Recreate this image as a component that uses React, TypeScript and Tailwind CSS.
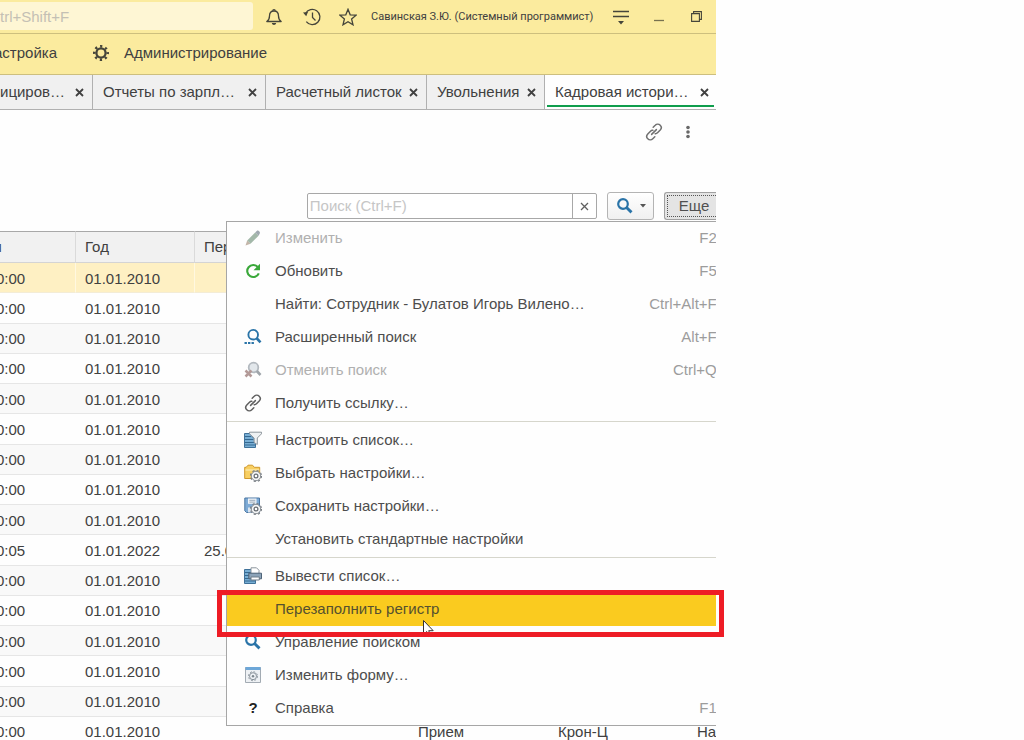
import React from "react";

type Row = { time: string; year: string; period?: string; kind?: string; org?: string; note?: string };

const plain: Row = { time: "0:00", year: "01.01.2010" };

const rows: Row[] = [
  ...Array.from({ length: 9 }, () => plain),
  { time: "0:05", year: "01.01.2022", period: "25.01.2022" },
  ...Array.from({ length: 5 }, () => plain),
  { ...plain, kind: "Прием", org: "Крон-Ц", note: "На" },
];

const tabs = [
  { title: "ициров…", width: "w-[93px] pl-0" },
  { title: "Отчеты по зарпл…", width: "w-[173px] pl-[10px]" },
  { title: "Расчетный листок", width: "w-[161px] pl-[10px]" },
  { title: "Увольнения", width: "w-[118px] pl-[10px]" },
];

const Cross = ({ size = 9 }: { size?: number }) => (
  <svg width={size} height={size} viewBox="0 0 9 9" fill="none" stroke="#404040" strokeWidth="1.8">
    <path d="M1 1l7 7M8 1L1 8" />
  </svg>
);

const LinkIcon = ({ color = "#606060" }: { color?: string }) => (
  <svg width="18" height="18" viewBox="0 0 18 18" fill="none" stroke={color} strokeWidth="1.5" strokeLinecap="round">
    <path d="M8.200 4.200l2-1.900c1.300-1.300 3.600-1.500 5-.1s1.300 3.500 0 4.900l-2.700 2.700c-.7.7-1.500 1-2.300.9" />
    <path d="M9.800 13.800l-2 1.900c-1.300 1.300-3.600 1.500-5 .1s-1.300-3.500 0-4.900l2.700-2.700c.7-.7 1.500-1 2.300-.9" />
    <path d="M6.600 11.400l4.800-4.800" />
  </svg>
);

const Lens = ({ color = "#2a74a8", glass = "none" }: { color?: string; glass?: string }) => (
  <svg width="18" height="18" viewBox="0 0 18 18" fill="none" stroke={color}>
    <circle cx="7" cy="7" r="4.800" strokeWidth="2.200" fill={glass} />
    <path d="M10.500 10.500l5 4.900" strokeWidth="2.900" />
  </svg>
);

const PencilIcon = () => (
  <svg width="18" height="18" viewBox="0 0 18 18">
    <path d="M1.500 16.500l1.700-5 3.300 3.300z" fill="#c3b5a8" />
    <path d="M3.200 11.500l8-8 3.400 3.300-8.100 8z" fill="#a3b8a9" />
    <path d="M11.200 3.500l1.500-1.500c.9-.8 1.700-.6 2.500.2s1.100 1.800.4 2.600l-1 2z" fill="#a0a9b0" />
  </svg>
);

const RefreshIcon = () => (
  <svg width="18" height="18" viewBox="0 0 18 18">
    <path d="M13.700 5A6 6 0 1 0 14.800 11.300" fill="none" stroke="#3aa83a" strokeWidth="2.100" />
    <path d="M16 1.800v6.400H9.500z" fill="#3aa83a" />
  </svg>
);

const AdvancedFindIcon = () => (
  <svg width="18" height="18" viewBox="0 0 18 18" fill="none" stroke="#2a74a8">
    <circle cx="9.200" cy="6.700" r="4.800" strokeWidth="1.900" />
    <path d="M12.500 10l4 4.300" strokeWidth="2.600" />
    <path d="M.5 15h2.400M4 15h2.400M7.500 15h2.400" strokeWidth="1.900" />
  </svg>
);

const CancelFindIcon = () => (
  <svg width="18" height="18" viewBox="0 0 18 18" fill="none">
    <circle cx="9.500" cy="6.500" r="4.800" stroke="#b3b9bf" strokeWidth="1.800" fill="#e2e7eb" />
    <path d="M12.800 10l3.700 4" stroke="#9fa5aa" strokeWidth="2.600" />
    <path d="M1.500 9.500l6 6M7.500 9.500l-6 6" stroke="#b39a98" strokeWidth="2.500" />
  </svg>
);

const Gear = () => (
  <g>
    <circle cx="12" cy="12" r="4.700" fill="#f4f5f6" stroke="#8a9096" strokeWidth="1" />
    <circle cx="12" cy="12" r="5.500" fill="none" stroke="#777d83" strokeWidth="1.200" strokeDasharray="2.160 2.160" />
    <circle cx="12" cy="12" r="1.900" fill="#fff" stroke="#666c72" strokeWidth="1.200" />
  </g>
);

const ListFilterIcon = () => (
  <svg width="18" height="18" viewBox="0 0 18 18">
    <path d="M.5 2.500H8v3l3.500 3v8H.5z" fill="#78aed4" stroke="#3f7199" />
    <path d="M1 5.500h6M1 8.500h8.500M1 11.500h10M1 14h10.500" stroke="#356890" />
    <path d="M5.500 1.200h12v1.600L13.300 7v6.500l-3.200-2V7L5.500 2.800z" fill="#eef1f3" stroke="#8d959c" />
  </svg>
);

const FolderGearIcon = () => (
  <svg width="18" height="18" viewBox="0 0 18 18">
    <path d="M.7 14.500V3.300h1.500L4 1.200h4.500l1.800 2.100h5.400v11.200z" fill="#f8cf62" stroke="#cf982c" />
    <path d="M1.500 6h13.800" stroke="#fbe7a8" strokeWidth="1.400" />
    <Gear />
  </svg>
);

const DiskGearIcon = () => (
  <svg width="18" height="18" viewBox="0 0 18 18">
    <path d="M.8 1h14.700v14.500H2.500L.8 13.800z" fill="#7eabd6" stroke="#4b77a3" />
    <path d="M4 1.500h8.500v5.300H4z" fill="#f0f4f8" />
    <path d="M5.300 3.300h6M5.300 5.100h6" stroke="#9cabb9" />
    <path d="M4 10.500h6v5H4z" fill="#dbe5ef" />
    <Gear />
  </svg>
);

const PrintListIcon = () => (
  <svg width="18" height="18" viewBox="0 0 18 18">
    <path d="M.5 2.500h11v14H.5z" fill="#78aed4" stroke="#3f7199" />
    <path d="M1 5.500h6M1 8.500h6M1 11.500h6M1 14h10" stroke="#356890" />
    <path d="M7 .8h5.500L15 3.300V7H7z" fill="#fff" stroke="#8b949c" />
    <path d="M4.800 6.200h12.700v5.600H4.800z" fill="#8ca3b8" stroke="#4d6378" />
    <path d="M7 10h8.300v3H7z" fill="#fff" stroke="#6f7d89" />
  </svg>
);

const FormIcon = () => (
  <svg width="18" height="18" viewBox="0 0 18 18">
    <path d="M1.500 1.500h15v15h-15z" fill="#eef1f4" stroke="#a3abb3" />
    <path d="M1.500 1h15v3h-15z" fill="#6da7d8" />
    <circle cx="9" cy="10.200" r="3.500" fill="none" stroke="#8a939b" />
    <circle cx="9" cy="10.200" r="4.500" fill="none" stroke="#8a939b" strokeDasharray="1.770 1.770" />
    <circle cx="9" cy="10.200" r="1.200" fill="#7d868e" />
  </svg>
);

const GearMark = () => (
  <svg width="18" height="18" viewBox="0 0 18 18" fill="none" stroke="#45453a">
    <circle cx="9" cy="9" r="4.600" strokeWidth="2.300" />
    <circle cx="9" cy="9" r="6.700" strokeWidth="2.600" strokeDasharray="2.200 3.062" strokeDashoffset="1.100" />
  </svg>
);

type Item = { label: string; icon?: React.ReactNode; keys?: string; off?: boolean; active?: boolean };

const groups: Item[][] = [
  [
    { label: "Изменить", icon: <PencilIcon />, keys: "F2", off: true },
    { label: "Обновить", icon: <RefreshIcon />, keys: "F5" },
    { label: "Найти: Сотрудник - Булатов Игорь Вилено…", keys: "Ctrl+Alt+F" },
    { label: "Расширенный поиск", icon: <AdvancedFindIcon />, keys: "Alt+F" },
    { label: "Отменить поиск", icon: <CancelFindIcon />, keys: "Ctrl+Q", off: true },
    { label: "Получить ссылку…", icon: <LinkIcon /> },
  ],
  [
    { label: "Настроить список…", icon: <ListFilterIcon /> },
    { label: "Выбрать настройки…", icon: <FolderGearIcon /> },
    { label: "Сохранить настройки…", icon: <DiskGearIcon /> },
    { label: "Установить стандартные настройки" },
  ],
  [
    { label: "Вывести список…", icon: <PrintListIcon /> },
    { label: "Перезаполнить регистр", active: true },
    { label: "Управление поиском", icon: <Lens /> },
    { label: "Изменить форму…", icon: <FormIcon /> },
    { label: "Справка", icon: <span className="text-[15px] font-bold text-[#222]">?</span>, keys: "F1" },
  ],
];

function Menu() {
  return (
    <div role="menu" className="absolute -right-[2px] left-[226px] top-[221px] border border-[#a6a6a6] bg-[#fefefe]">
      {groups.map((group, g) => (
        <div key={g} role="group">
          {g > 0 && (
            <div role="separator" className="h-1 pt-px">
              <div className="h-px w-full bg-[#d6d6cc]" />
            </div>
          )}
          {group.map((item) => (
            <button
              key={item.label}
              role="menuitem"
              disabled={item.off}
              className={`flex h-[33px] w-full items-center pb-px pl-[17px] text-left ${
                item.active ? "bg-[#facb1f] text-[#55502f]" : item.off ? "text-[#b0b0b0]" : "text-[#4d4d4d]"
              }`}
            >
              <span className="flex w-[18px] shrink-0 justify-center">{item.icon}</span>
              <span className="ml-[13px] flex-1 whitespace-nowrap">{item.label}</span>
              <span className="text-[#9c9c9c]">{item.keys}</span>
            </button>
          ))}
        </div>
      ))}
    </div>
  );
}

export default function App() {
  const cell = "overflow-hidden whitespace-nowrap border-b pb-0 pt-[2px] text-left font-normal";
  return (
    <div className="h-screen overflow-hidden bg-[#fefefe] font-['Liberation_Sans',Arial,sans-serif] text-[15px] leading-5 text-[#404040]">
      <div className="relative h-full w-[69.9%]">
        <div className="relative flex h-full flex-col overflow-hidden">
          <header className="flex h-[34px] shrink-0 items-center border-b border-[#cdbf7e] bg-[#fbeb9e]">
            <input
              aria-label="Поиск"
              placeholder="trl+Shift+F"
              className="mb-px h-7 w-[253px] shrink-0 rounded-r-[3px] bg-[#fef6d4] outline-none placeholder:text-[#c4c0b4]"
            />
            <button aria-label="Оповещения" className="ml-3 shrink-0">
              <svg width="18" height="18" viewBox="0 0 18 18" fill="none" stroke="#45453a" strokeWidth="1.300">
                <path d="M1.800 13.500c2.200-1.500 2.700-3 2.700-5.500 0-3 1.500-5 4.500-5s4.500 2 4.500 5c0 2.500.5 4 2.700 5.500z" strokeLinejoin="round" />
                <path d="M7.800 2.800a1.200 1.200 0 1 1 2.400 0" />
                <path d="M6.800 15h4.400c-.4 1.400-1.200 1.900-2.200 1.900s-1.800-.5-2.200-1.900z" fill="#45453a" stroke="none" />
              </svg>
            </button>
            <button aria-label="История" className="ml-5 shrink-0">
              <svg width="18" height="18" viewBox="0 0 18 18" fill="none" stroke="#45453a" strokeWidth="1.300">
                <path d="M2.500 5.700A7.600 7.600 0 1 1 3.300 13.700" />
                <path d="M9.500 4.500v5l3 3" />
                <path d="M0 4.500l5-.5-1.800 4.300z" fill="#45453a" stroke="none" />
              </svg>
            </button>
            <button aria-label="Избранное" className="ml-[18px] shrink-0">
              <svg width="18" height="18" viewBox="0 0 18 18" fill="none" stroke="#45453a" strokeWidth="1.300">
                <path d="M9 1.300l2.200 5.500 5.900.4-4.500 3.800 1.400 5.800L9 13.700l-5 3.100L5.400 11 .9 7.200l5.900-.4z" />
              </svg>
            </button>
            <span className="ml-[14px] whitespace-nowrap font-[Roboto,sans-serif] text-[11px]">Савинская З.Ю. (Системный программист)</span>
            <div className="ml-auto flex shrink-0 items-center pr-[14px]">
              <button aria-label="Сервис">
                <svg width="18" height="18" viewBox="0 0 18 18" stroke="#45453a" strokeWidth="1.300">
                  <path d="M1 3.500h16M1 8.500h16" />
                  <path d="M6 13h6l-3 3.500z" fill="#45453a" stroke="none" />
                </svg>
              </button>
              <button aria-label="Свернуть" className="ml-[24px]">
                <svg width="10" height="12" viewBox="0 0 10 12" stroke="#77714f" strokeWidth="1.300">
                  <path d="M0 9.500h10" />
                </svg>
              </button>
              <button aria-label="Восстановить" className="ml-[27px]">
                <svg width="11" height="11" viewBox="0 0 11 11" fill="none" stroke="#45453a" strokeWidth="1.100">
                  <path d="M.6 2.600h7.800v7.800H.6zM2.600 2.600V.6h7.800v7.800h-2" />
                </svg>
              </button>
            </div>
          </header>

          <nav className="flex h-[41px] shrink-0 items-center border-b border-[#cdbf7e] bg-[#fbeb9e] pb-[3px]">
            <a href="#setup" className="-ml-[6px] w-[98px]">астройка</a>
            <a href="#admin" className="flex items-center gap-[14px]">
              <GearMark />
              Администрирование
            </a>
          </nav>

          <div role="tablist" className="flex h-[35px] shrink-0">
            {tabs.map((tab) => (
              <div
                key={tab.title}
                role="tab"
                className={`flex shrink-0 items-center justify-between border-b border-r border-[#b0b0b0] bg-[#f0f0f0] pr-2 whitespace-nowrap ${tab.width}`}
              >
                <span>{tab.title}</span>
                <button aria-label="Закрыть"><Cross /></button>
              </div>
            ))}
            <div role="tab" aria-selected="true" className="flex flex-1 border-b border-[#b0b0b0] bg-[#fefefe] px-[2px] pb-[2px]">
              <div className="flex flex-1 items-center justify-between border-b-2 border-[#0f9d4c] pl-2 pr-[5px] pt-1 whitespace-nowrap">
                <span>Кадровая истори…</span>
                <button aria-label="Закрыть"><Cross /></button>
              </div>
            </div>
          </div>

          <div className="flex h-11 shrink-0 items-center justify-end gap-4 pr-[19px]">
            <button aria-label="Получить ссылку"><LinkIcon color="#707070" /></button>
            <button aria-label="Меню">
              <svg width="18" height="14" viewBox="0 0 18 14" fill="#686868">
                <circle cx="9" cy="2.500" r="1.800" /><circle cx="9" cy="7" r="1.800" /><circle cx="9" cy="11.500" r="1.800" />
              </svg>
            </button>
          </div>

          <div className="mt-[38px] flex h-7 shrink-0 items-center justify-end">
            <div className="flex h-[26px] w-[290px] rounded-[2px] border border-[#a8a8a8] bg-white">
              <input
                aria-label="Поиск (Ctrl+F)"
                placeholder="Поиск (Ctrl+F)"
                className="min-w-0 flex-1 pl-[2px] outline-none placeholder:text-[#c6c6c6]"
              />
              <button aria-label="Очистить" className="flex w-6 items-center justify-center border-l border-[#a8a8a8]">
                <svg width="9" height="9" viewBox="0 0 9 9" stroke="#606060" strokeWidth="1.300"><path d="M1 1l7 7M8 1L1 8" /></svg>
              </button>
            </div>
            <button
              aria-label="Найти"
              className="ml-[10px] flex h-7 w-[47px] items-center justify-between rounded-[3px] border border-[#b4b4b4] bg-linear-to-b from-white to-[#f0f0f0] pl-2 pr-[7px]"
            >
              <Lens />
              <svg width="6" height="4" viewBox="0 0 6 4"><path d="M0 0h6L3 3.500z" fill="#555" /></svg>
            </button>
            <button className="ml-[10px] flex h-7 w-[52px] rounded-l-[3px] border border-r-0 border-[#a0a0a0] bg-[#e4e4e4] pl-[2px] py-[2px] text-[15px] text-[#505050]">
              <span className="flex flex-1 items-center border border-r-0 border-dotted border-[#555] pl-[11px]">Еще</span>
            </button>
          </div>

          <table className="mt-[11px] h-[516px] w-full shrink-0 table-fixed border-separate border-spacing-0">
            <colgroup>
              <col className="w-[76px]" />
              <col className="w-[119px]" />
              <col className="w-[214px]" />
              <col className="w-[140px]" />
              <col className="w-[139px]" />
              <col />
            </colgroup>
            <thead>
              <tr className="h-8 bg-[#f1f1f1]">
                {["л", "Год", "Период", "", "", ""].map((name, i) => (
                  <th
                    key={i}
                    className={`overflow-hidden whitespace-nowrap border-b border-r border-t border-b-[#d4d4d4] border-r-[#dadada] border-t-[#a8a8a8] pb-px pt-0 text-left font-normal ${
                      i === 0 ? "pl-0" : "pl-[9px]"
                    }`}
                  >
                    {i === 0 ? <span className="-ml-[7px]">{name}</span> : name}
                  </th>
                ))}
              </tr>
            </thead>
            <tbody>
              {rows.map((row, i) => {
                const tone = i === 0 ? "bg-[#fef0c3]" : i % 2 === 0 ? "bg-[#f9f9f9]" : "bg-[#fefefe]";
                const line = i === 0 ? "border-r border-b-[#f3ecd6] border-r-[#fff8e0]" : "border-b-[#e6e6e6]";
                return (
                  <tr key={i} className={tone}>
                    <td className={`${cell} ${line} pl-0`}>
                      <span className="-ml-1">{row.time}</span>
                    </td>
                    <td className={`${cell} ${line} pl-[9px]`}>{row.year}</td>
                    <td className={`${cell} ${line} pl-[9px]`}>{row.period}</td>
                    <td className={`${cell} ${line} pl-[9px]`}>{row.kind}</td>
                    <td className={`${cell} ${line} pl-[9px]`}>{row.org}</td>
                    <td className={`${cell} ${line} pl-[9px]`}>{row.note}</td>
                  </tr>
                );
              })}
            </tbody>
          </table>

          <Menu />

          <svg className="absolute left-[422px] top-[619px]" width="13" height="19" viewBox="0 0 13 19">
            <path d="M1.500 1.500v14l3.200-3 2.200 5 2-.9-2.200-4.900h4.500z" fill="#fff" stroke="#333" />
          </svg>
        </div>
        <div className="absolute -right-2 left-[217px] top-[590px] h-[47px] border-[5px] border-[#ee1c25]" />
      </div>
    </div>
  );
}
